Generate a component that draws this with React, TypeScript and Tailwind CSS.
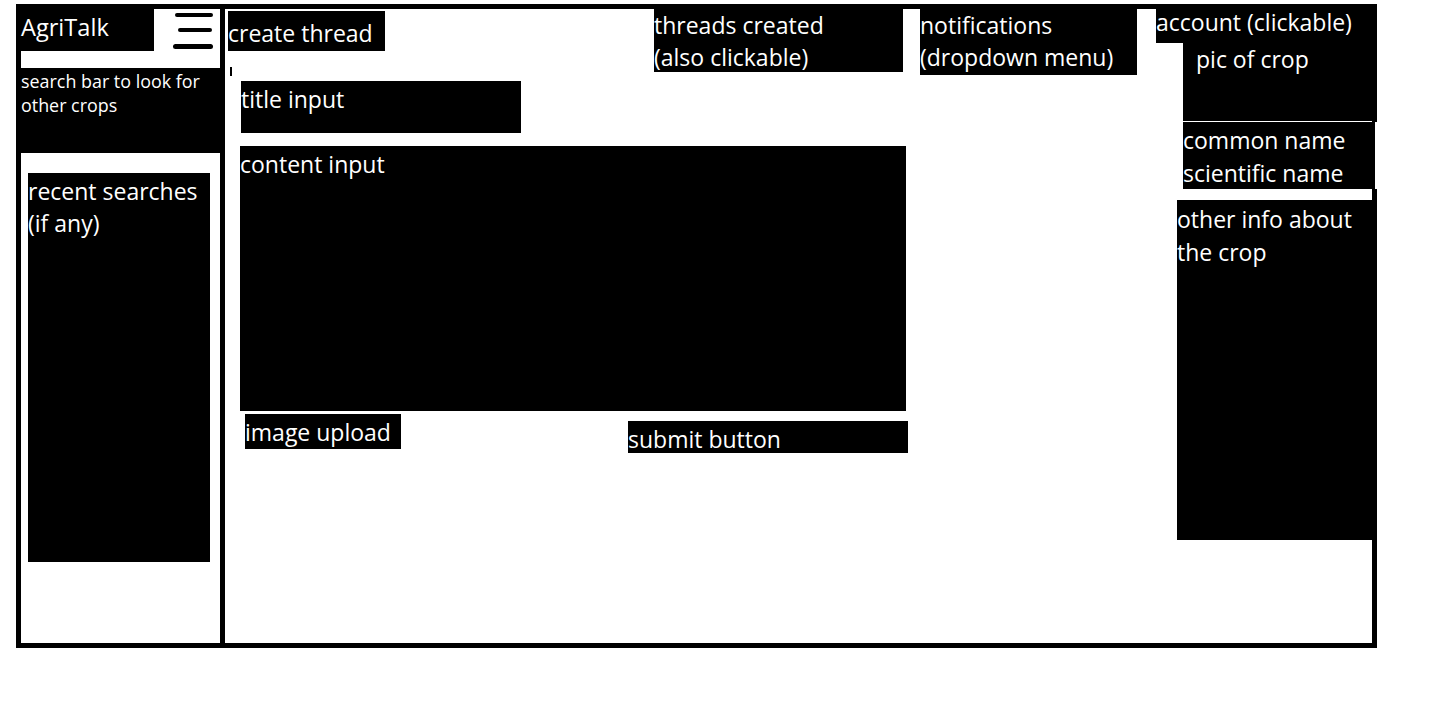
import React from "react";

const font = { fontFamily: '"Open Sans", "Noto Sans", sans-serif' };

function Box({ className, children }: { className: string; children?: React.ReactNode }) {
  return <div className={`bg-black text-white shrink-0 ${className}`}>{children}</div>;
}

export default function App() {
  return (
    <div className="w-[1434px] h-[714px] bg-white pt-[4px] pl-[16px]" style={font}>
      <div className="relative flex w-[1361px] h-[644px] border-[5px] border-black text-[23px] leading-[32px]">
        {/* Sidebar */}
        <div className="flex w-[204px] shrink-0 flex-col border-r-[5px] border-black">
          <div className="flex h-[42px]">
            <div className="w-[133px] bg-black pt-[2px] text-[23.6px] text-white">AgriTalk</div>
            <div className="flex flex-1 flex-col bg-white">
              <div className="ml-[21px] mt-[4px] h-[4px] w-[38px] rounded-full bg-black" />
              <div className="ml-[24px] mt-[11px] h-[4px] w-[34px] rounded-full bg-black" />
              <div className="ml-[19px] mt-[12px] h-[5px] w-[40px] rounded-full bg-black" />
            </div>
          </div>
          <div className="h-[17px] bg-white" />
          <div className="h-[85px] bg-black pt-px text-[17.9px] leading-[24px] text-white">
            search bar to look for
            <br />
            other crops
          </div>
          <Box className="ml-[7px] mt-[20px] h-[389px] w-[182px] pt-[2px]">
            recent searches
            <br />
            (if any)
          </Box>
        </div>

        {/* Main */}
        <div className="flex flex-1">
          {/* Form column */}
          <div className="flex w-[683px] shrink-0 flex-col">
            <div className="flex items-start">
              <div className="ml-[3px] flex flex-col">
                <Box className="mt-[2px] h-[40px] w-[157px] pt-[6px]">create thread</Box>
                <div className="ml-[2px] mt-[16px] h-[9px] w-[2px] bg-black" />
              </div>
              <Box className="ml-[269px] h-[63px] w-[249px]">
                threads created
                <br />
                (also clickable)
              </Box>
            </div>
            <Box className="ml-[16px] mt-[5px] h-[52px] w-[280px] pt-[2px]">title input</Box>
            <Box className="ml-[15px] mt-[13px] h-[265px] w-[666px] pt-[2px]">content input</Box>
            <div className="flex items-start">
              <Box className="ml-[20px] mt-[3px] h-[35px] w-[156px] pt-[2px]">image upload</Box>
              <Box className="ml-[227px] mt-[10px] h-[32px] w-[280px] pt-[2px]">submit button</Box>
            </div>
          </div>

          {/* Notifications */}
          <Box className="ml-[12px] h-[66px] w-[217px] self-start">
            notifications
            <br />
            (dropdown menu)
          </Box>

          {/* Right column */}
          <div className="ml-[19px] flex w-[216px] shrink-0 flex-col">
            <Box className="h-[34px] w-[216px]">
              <div className="-mt-[3px]">account (clickable)</div>
            </Box>
            <Box className="ml-[27px] h-[78px] w-[189px] pl-[13px]">pic of crop</Box>
            <Box className="ml-[27px] mt-px h-[67px] w-[189px] pt-[2px] leading-[33px]">
              common name
              <br />
              scientific name
            </Box>
            <Box className="ml-[21px] mt-[11px] h-[340px] w-[195px] pt-[3px] leading-[33px]">
              other info about
              <br />
              the crop
            </Box>
          </div>
        </div>

        {/* gap in the right border beside the names box */}
        <div className="absolute left-[1354px] top-[113px] h-[67px] w-[2px] bg-white" />
      </div>
    </div>
  );
}
